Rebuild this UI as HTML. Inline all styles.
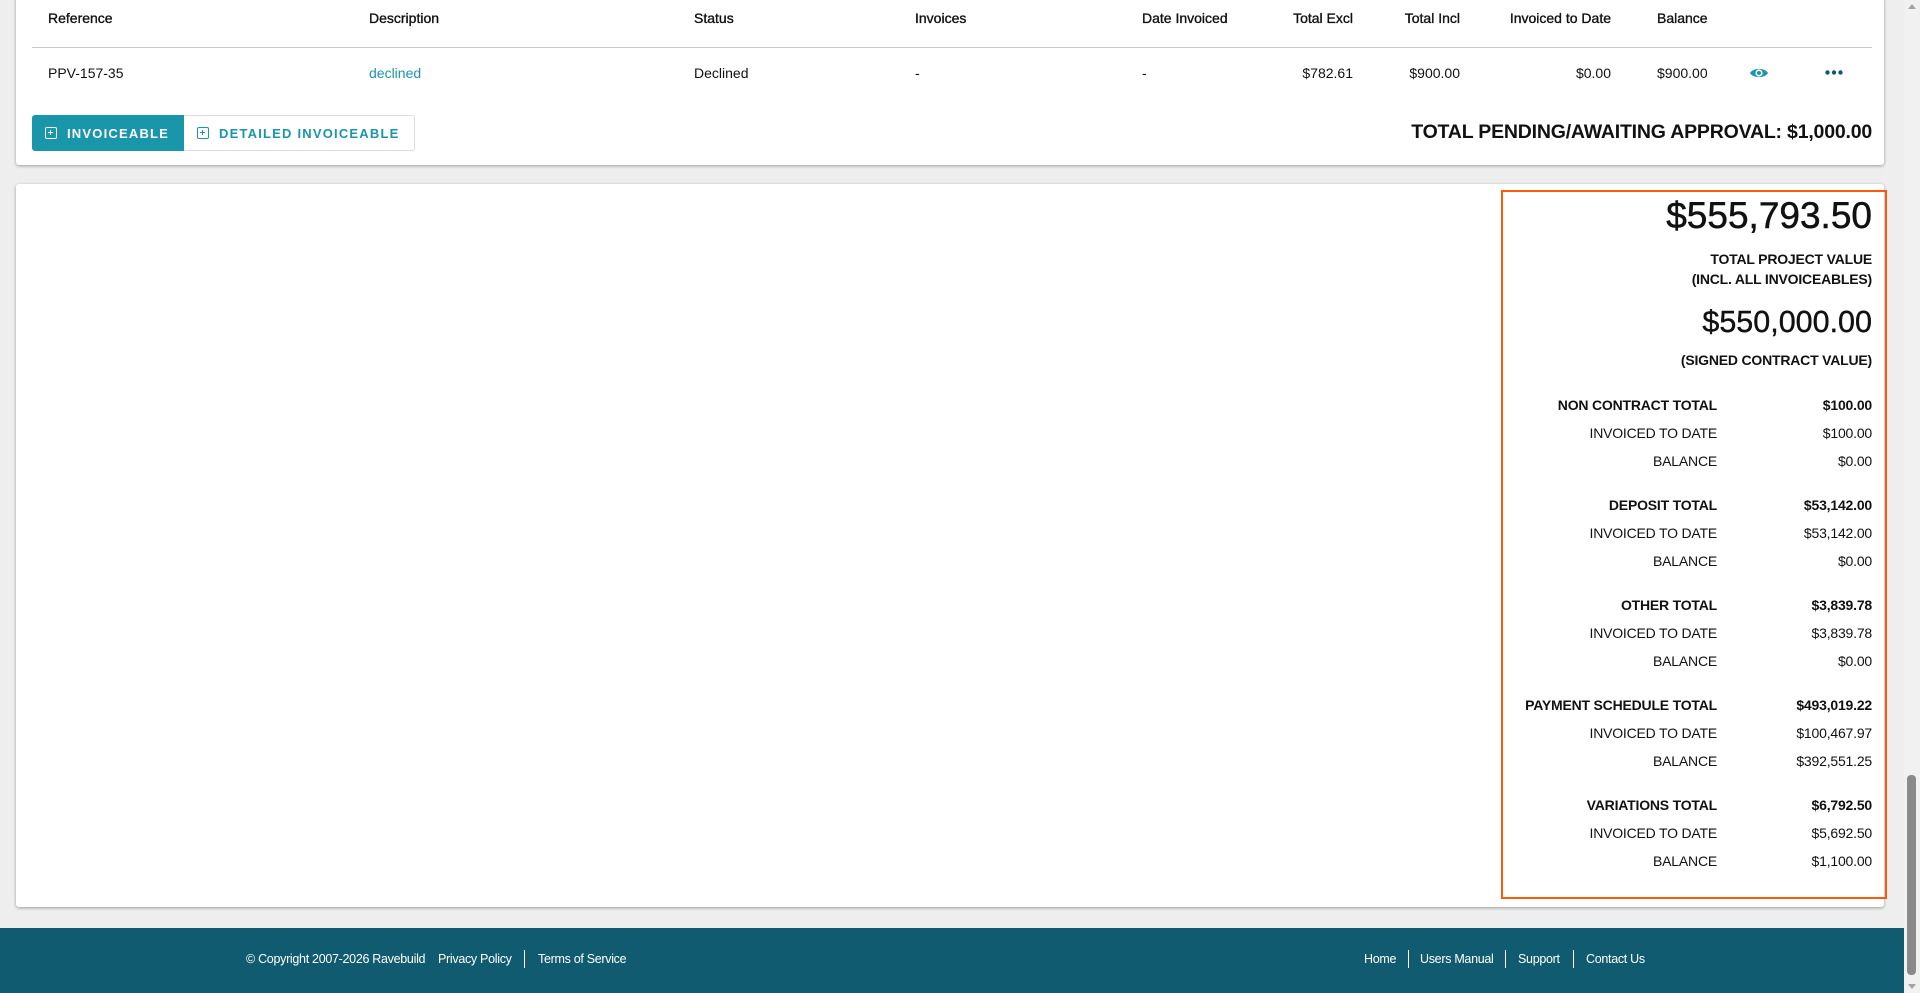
<!DOCTYPE html>
<html><head><meta charset="utf-8"><style>
*{margin:0;padding:0;box-sizing:border-box}
body{width:1920px;height:993px;background:#eeeeee;font-family:"Liberation Sans",Arial,sans-serif;color:#111;position:relative;overflow:hidden;font-size:14px}
.a{position:absolute;white-space:nowrap}
.card{position:absolute;background:#fff;border-radius:3px;box-shadow:0 1px 3px rgba(0,0,0,.35)}
.h{font-size:14px;-webkit-text-stroke:.35px #111;top:10px}
.r{top:65px}
.rt{text-align:right}
.btn{position:absolute;top:115px;height:36px;font-size:13px;font-weight:bold;letter-spacing:1.2px;display:flex;align-items:center}
.sq{display:inline-block;width:12px;height:12px;border:1.5px solid currentColor;border-radius:2px;position:relative;margin-right:10px}
.sq:before{content:"";position:absolute;left:1.75px;top:3.75px;width:5.5px;height:1.5px;background:currentColor}
.sq:after{content:"";position:absolute;left:3.75px;top:1.75px;width:1.5px;height:5.5px;background:currentColor}
.lbl{right:203px;text-align:right;font-size:14px;letter-spacing:-.2px}
.val{right:48px;text-align:right;font-size:14px;letter-spacing:-.2px}
.b{font-weight:bold}
.ft{color:#fff;font-size:12.5px;top:952px;letter-spacing:-.3px}
.sep{position:absolute;top:950px;width:1px;height:18px;background:#fff}
</style></head><body>
<div class="card" style="left:16px;top:-5px;width:1868px;height:170px"></div>
<div class="a" style="left:32px;top:47px;width:1840px;height:1px;background:#c8c8c8"></div>
<div class="a h" style="left:48px">Reference</div>
<div class="a h" style="left:369px">Description</div>
<div class="a h" style="left:694px">Status</div>
<div class="a h" style="left:915px">Invoices</div>
<div class="a h" style="left:1142px">Date Invoiced</div>
<div class="a h rt" style="right:567px">Total Excl</div>
<div class="a h rt" style="right:460px">Total Incl</div>
<div class="a h rt" style="right:309px">Invoiced to Date</div>
<div class="a h" style="left:1657px">Balance</div>
<div class="a r" style="left:48px">PPV-157-35</div>
<div class="a r" style="left:369px;color:#1a96aa">declined</div>
<div class="a r" style="left:694px">Declined</div>
<div class="a r" style="left:915px">-</div>
<div class="a r" style="left:1142px">-</div>
<div class="a r rt" style="right:567px">$782.61</div>
<div class="a r rt" style="right:460px">$900.00</div>
<div class="a r rt" style="right:309px">$0.00</div>
<div class="a r" style="left:1657px">$900.00</div>
<svg class="a" style="left:1749px;top:65px" width="20" height="16" viewBox="0 0 20 16"><path d="M1 8C4 2.5 16 2.5 19 8C16 13.5 4 13.5 1 8Z" fill="#1a96aa"/><circle cx="10" cy="8" r="3.6" fill="#fff"/><circle cx="10" cy="8" r="2" fill="#1a96aa"/></svg>
<svg class="a" style="left:1825px;top:70px" width="18" height="5"><circle cx="2.5" cy="2.5" r="2.2" fill="#0f5b6e"/><circle cx="9" cy="2.5" r="2.2" fill="#0f5b6e"/><circle cx="15.5" cy="2.5" r="2.2" fill="#0f5b6e"/></svg>
<div class="btn" style="left:32px;width:152px;background:#1a96aa;color:#fff;padding-left:13px;border-radius:3px 0 0 3px"><span class="sq"></span>INVOICEABLE</div>
<div class="btn" style="left:184px;width:231px;background:#fff;color:#1a96aa;padding-left:13px;border:1px solid #ddd;border-left:none;border-radius:0 3px 3px 0"><span class="sq"></span>DETAILED INVOICEABLE</div>
<div class="a b" style="right:48px;top:121px;font-size:19.5px;letter-spacing:-.2px">TOTAL PENDING/AWAITING APPROVAL: $1,000.00</div>

<div class="card" style="left:16px;top:184px;width:1868px;height:723px"></div>
<div class="a" style="left:1501px;top:190px;width:386px;height:709px;border:2px solid #ff5a0a"></div>
<div class="a" style="right:48px;top:195px;font-size:37px;-webkit-text-stroke:.5px #111">$555,793.50</div>
<div class="a b" style="right:48px;top:249px;font-size:14px;line-height:20px;text-align:right;letter-spacing:-.2px">TOTAL PROJECT VALUE<br>(INCL. ALL INVOICEABLES)</div>
<div class="a" style="right:48px;top:305px;font-size:30.5px;-webkit-text-stroke:.4px #111">$550,000.00</div>
<div class="a b" style="right:48px;top:352px;font-size:14px;letter-spacing:-.2px">(SIGNED CONTRACT VALUE)</div>

<div class="a lbl b" style="top:397px">NON CONTRACT TOTAL</div><div class="a val b" style="top:397px">$100.00</div>
<div class="a lbl" style="top:425px">INVOICED TO DATE</div><div class="a val" style="top:425px">$100.00</div>
<div class="a lbl" style="top:453px">BALANCE</div><div class="a val" style="top:453px">$0.00</div>
<div class="a lbl b" style="top:497px">DEPOSIT TOTAL</div><div class="a val b" style="top:497px">$53,142.00</div>
<div class="a lbl" style="top:525px">INVOICED TO DATE</div><div class="a val" style="top:525px">$53,142.00</div>
<div class="a lbl" style="top:553px">BALANCE</div><div class="a val" style="top:553px">$0.00</div>
<div class="a lbl b" style="top:597px">OTHER TOTAL</div><div class="a val b" style="top:597px">$3,839.78</div>
<div class="a lbl" style="top:625px">INVOICED TO DATE</div><div class="a val" style="top:625px">$3,839.78</div>
<div class="a lbl" style="top:653px">BALANCE</div><div class="a val" style="top:653px">$0.00</div>
<div class="a lbl b" style="top:697px">PAYMENT SCHEDULE TOTAL</div><div class="a val b" style="top:697px">$493,019.22</div>
<div class="a lbl" style="top:725px">INVOICED TO DATE</div><div class="a val" style="top:725px">$100,467.97</div>
<div class="a lbl" style="top:753px">BALANCE</div><div class="a val" style="top:753px">$392,551.25</div>
<div class="a lbl b" style="top:797px">VARIATIONS TOTAL</div><div class="a val b" style="top:797px">$6,792.50</div>
<div class="a lbl" style="top:825px">INVOICED TO DATE</div><div class="a val" style="top:825px">$5,692.50</div>
<div class="a lbl" style="top:853px">BALANCE</div><div class="a val" style="top:853px">$1,100.00</div>

<div class="a" style="left:0;top:928px;width:1904px;height:65px;background:#105b6f"></div>
<div class="a ft" style="left:246px">© Copyright 2007-2026 Ravebuild</div>
<div class="a ft" style="left:438px">Privacy Policy</div>
<div class="sep" style="left:524px"></div>
<div class="a ft" style="left:538px">Terms of Service</div>
<div class="a ft" style="left:1364px">Home</div>
<div class="sep" style="left:1408px"></div>
<div class="a ft" style="left:1420px">Users Manual</div>
<div class="sep" style="left:1505px"></div>
<div class="a ft" style="left:1518px">Support</div>
<div class="sep" style="left:1573px"></div>
<div class="a ft" style="left:1586px">Contact Us</div>

<div class="a" style="left:1904px;top:0;width:16px;height:993px;background:#f1f1f1"></div>
<div class="a" style="left:1908px;top:4px;width:0;height:0;border-left:4px solid transparent;border-right:4px solid transparent;border-bottom:5px solid #a3a3a3"></div>
<div class="a" style="left:1908px;top:984px;width:0;height:0;border-left:4px solid transparent;border-right:4px solid transparent;border-top:5px solid #a3a3a3"></div>
<div class="a" style="left:1907px;top:775px;width:9px;height:200px;background:#8a8a8a;border-radius:4px"></div>
</body></html>
